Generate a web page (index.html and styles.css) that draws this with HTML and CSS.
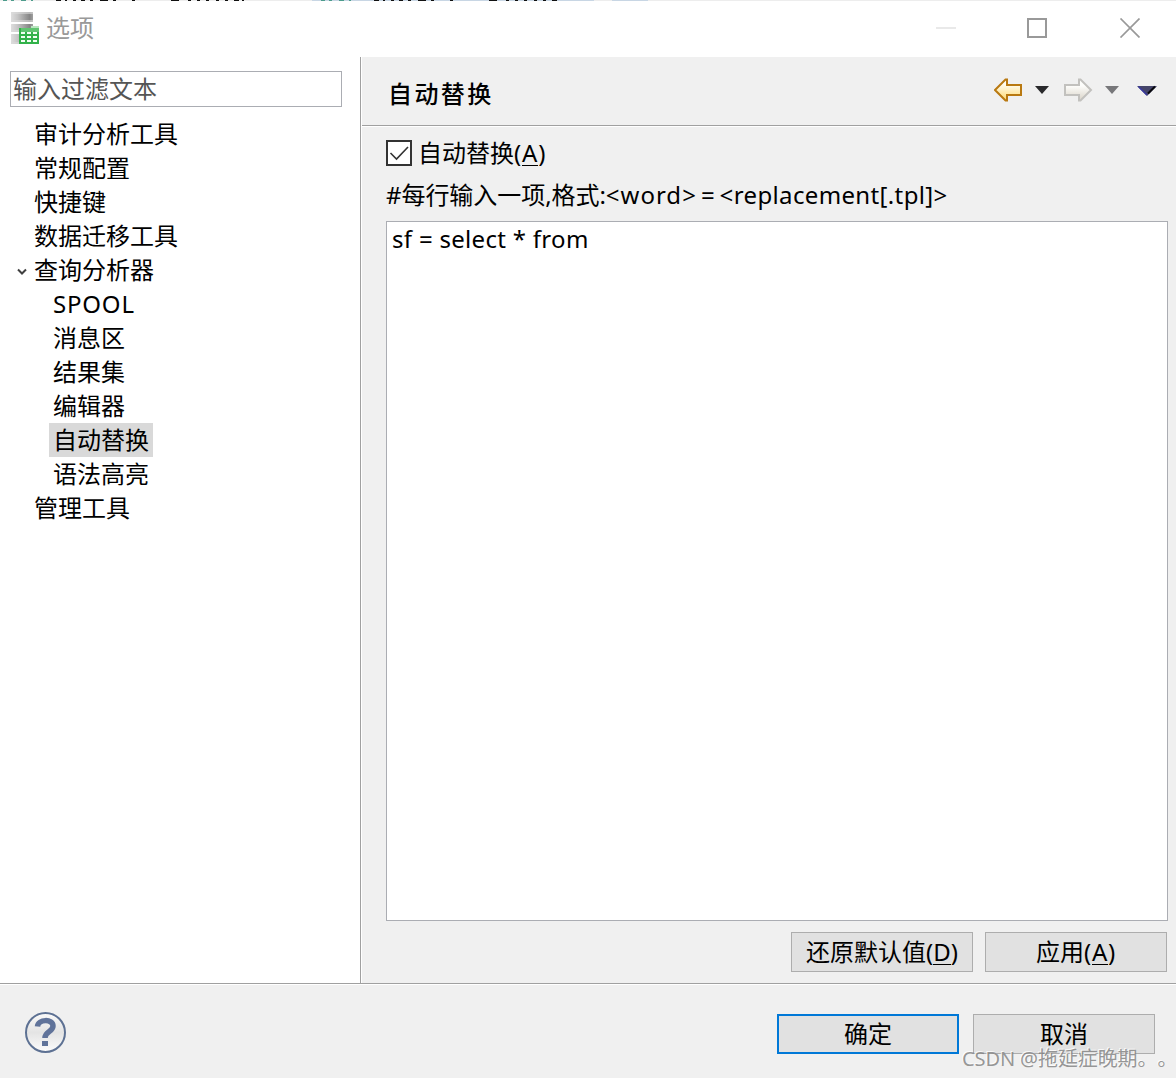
FILE: index.html
```html
<!DOCTYPE html>
<html lang="zh-CN">
<head>
<meta charset="utf-8">
<title>选项</title>
<link rel="stylesheet" href="styles.css">
</head>
<body>
<div class="window">
  <svg class="backdrop" width="1176" height="1" viewBox="0 0 1176 1" shape-rendering="crispEdges">
    <rect width="1176" height="1" fill="#ededed"/>
    <rect x="312" width="282" height="1" fill="#c8d6e4"/><rect x="612" width="36" height="1" fill="#c8d6e4"/>
    <path d="M3 .5h4m4 0h3m7 0h5m5 0h2M321 .5h4m4 0h3m7 0h5m5 0h2" stroke="#4d9c8c"/>
    <path d="M56 .5h5m4 0h2m6 0h3m5 0h4m5 0h3m7 0h8m5 0h3m16 0h3m36 0h8m9 0h3m6 0h3m6 0h3m7 0h3m6 0h3m6 0h5m3 0h2M374 .5h5m4 0h2m6 0h3m5 0h4m5 0h3m7 0h8m5 0h3m16 0h3m36 0h8m9 0h3m6 0h3m6 0h3m7 0h3m6 0h3m6 0h5" stroke="#111"/>
  </svg>
  <header class="titlebar">
    <svg class="app-icon" width="28" height="32" viewBox="0 0 28 32" shape-rendering="crispEdges">
      <defs><linearGradient id="steel"><stop offset="0" stop-color="#dedede"/><stop offset=".3" stop-color="#c6c6c6"/><stop offset=".85" stop-color="#858585"/><stop offset="1" stop-color="#a0a0a0"/></linearGradient></defs>
      <path d="M0 0h22v10H0zM0 12h22v8H0zM0 22h22v10H0z" fill="url(#steel)"/>
      <path d="M0 0h22v2H0zM0 8h22v2H0zM0 18h22v2H0zM0 30h22v2H0z" fill="#dcdcdc" opacity=".6"/>
      <path d="M20 14h8v2h-8z" fill="#b9e5bf"/>
      <path d="M8 16h20v16H8z" fill="#32b24a"/><path d="M10 16h18v4H10z" fill="#60c471"/>
      <path d="M10 20h4v2h-4zm6 0h4v2h-4zm6 0h4v2h-4zM10 24h4v2h-4zm6 0h4v2h-4zm6 0h4v2h-4zM10 28h4v2h-4zm6 0h4v2h-4zm6 0h4v2h-4z" fill="#f2fff3"/>
    </svg>
    <span class="title">选项</span>
    <svg class="win-controls" width="204" height="20" viewBox="0 0 204 20" fill="none">
      <path d="M0 10h20" stroke="#e9e9e9" stroke-width="2" shape-rendering="crispEdges"/>
      <path d="M92 1h18v18H92z" stroke="#999" stroke-width="2"/>
      <path d="M184.500.5l19 19m0-19l-19 19" stroke="#999" stroke-width="1.700"/>
    </svg>
  </header>
  <main class="main">
    <aside class="sidebar">
      <div class="filter">输入过滤文本</div>
      <ul class="tree">
        <li>审计分析工具</li><li>常规配置</li><li>快捷键</li><li>数据迁移工具</li>
        <li class="open"><svg class="chevron" width="10" height="8" viewBox="0 0 10 8"><path d="M1 1.500l4 4 4-4" fill="none" stroke="#404040" stroke-width="2"/></svg>查询分析器
          <ul class="subtree">
            <li class="spool">SPOOL</li><li>消息区</li><li>结果集</li><li>编辑器</li>
            <li><span class="selected">自动替换</span></li><li>语法高亮</li>
          </ul>
        </li>
        <li>管理工具</li>
      </ul>
    </aside>
    <section class="page">
      <div class="page-header">
        <h1>自动替换</h1>
        <svg class="nav" width="164" height="24" viewBox="0 0 164 24">
          <defs>
            <linearGradient id="gold" x2="0" y2="1"><stop offset=".2" stop-color="#fffdf4"/><stop offset="1" stop-color="#ffd96d"/></linearGradient>
            <linearGradient id="pale" x2="0" y2="1"><stop offset=".3" stop-color="#fdfdfb"/><stop offset="1" stop-color="#d9d3c8"/></linearGradient>
          </defs>
          <path d="M1 12L11.500 1.500H13V7h14v10H13v5.500h-1.500z" fill="url(#gold)" stroke="#b97911" stroke-width="2"/>
          <path d="M41 8h14l-7 8z" fill="#29292b"/>
          <path d="M97 12L86.500 1.500H85V7H71v10h14v5.500h1.500z" fill="url(#pale)" stroke="#c2c1be" stroke-width="2"/>
          <path d="M111 8h14l-7 8z" fill="#77777a"/>
          <path d="M143 8h20l-10 10z" fill="#45456a"/><path d="M144.500 8.500l8.500 8.500" stroke="#3838a0" stroke-width="1.500"/><path d="M161 8.500l-7 7" stroke="#08080c" stroke-width="2"/>
        </svg>
      </div>
      <div class="page-body">
        <div class="check-row">
          <svg width="26" height="26" viewBox="0 0 26 26"><path d="M1 1h24v24H1z" fill="#fff" stroke="#333" stroke-width="2"/><path d="M4.500 13l6 6L22 7" fill="none" stroke="#333" stroke-width="1.600"/></svg>
          <span class="check-label">自动替换<span class="key">(<u>A</u>)</span></span>
        </div>
        <div class="hint"><span class="hint-cn">#每行输入一项,格式:</span><span class="hint-word">&lt;word&gt;</span><span class="hint-eq">=</span><span class="hint-format">&lt;replacement[.tpl]&gt;</span></div>
        <div class="editor">sf = select * from</div>
        <div class="actions"><div class="button"><span>还原默认值(<u>D</u>)</span></div><div class="button"><span>应用<span class="key">(<u>A</u>)</span></span></div></div>
      </div>
    </section>
  </main>
  <footer class="footer">
    <svg class="help" width="42" height="42" viewBox="0 0 42 42">
      <defs><linearGradient id="glass" x2="0" y2="1"><stop offset="0" stop-color="#fafafa"/><stop offset=".5" stop-color="#e4e4e4"/><stop offset="1" stop-color="#fcfcfc"/></linearGradient></defs>
      <circle cx="20.500" cy="20.500" r="19.500" fill="url(#glass)" stroke="#5d7193" stroke-width="2"/>
      <path d="M12.500 14.500c.5-7.500 15.500-8 15.500-.5 0 6-8 5-8 12" fill="none" stroke="#60739a" stroke-width="5.500"/><path d="M17 29h6v5h-6z" fill="#60739a"/>
    </svg>
    <div class="dialog-buttons"><div class="button primary"><span>确定</span></div><div class="button"><span>取消</span></div></div>
  </footer>
  <div class="watermark">CSDN @拖延症晚期。。</div>
</div>
</body>
</html>
```
FILE: styles.css
```css
* { box-sizing: border-box; }
body { margin: 0; font: 400 24px/34px "Noto Sans", "Noto Sans CJK SC", sans-serif; color: #000; background: #fff; }
.window { position: relative; display: flex; flex-direction: column; width: 1176px; height: 1078px; overflow: hidden; }
svg { display: block; flex: none; }
ul { list-style: none; margin: 0; padding: 0; }
u { text-decoration: none; box-shadow: inset 0 -1px #000; display: inline-block; line-height: 27px; }
.titlebar { display: flex; height: 56px; padding: 11px 36px 0 11px; }
.title { margin: -1px auto 0 7px; color: #999; }
.win-controls { margin-top: 6px; }
.main { display: flex; height: 926px; }
.sidebar { width: 361px; border-right: 1px solid #a0a0a0; padding: 14px 18px 0 10px; }
.filter { height: 36px; border: 1px solid #abadb3; padding-left: 2px; color: #555; line-height: 34px; }
.tree { margin-top: 10px; padding-left: 24px; }
.tree li { min-height: 34px; white-space: nowrap; }
.open { position: relative; }
.chevron { position: absolute; left: -17px; top: 15px; }
.subtree { padding-left: 19px; }
.spool { letter-spacing: .8px; }
.selected { display: inline-block; height: 34px; margin-left: -4px; padding: 0 4px; background: #d9d9d9; }
.page { flex: 1; background: #f0f0f0; border-left: 1px solid #fff; }
.page-header { display: flex; justify-content: space-between; height: 69px; padding: 21px 18px 0 26px; border-bottom: 1px solid #a0a0a0; box-shadow: 0 1px #fff; }
h1 { margin: -1px 0 0; font: 500 24px/32px "Noto Sans CJK SC", sans-serif; letter-spacing: 2.4px; }
.page-body { padding: 14px 8px 0 24px; }
.check-row { display: flex; align-items: center; height: 26px; gap: 6px; }
.key { letter-spacing: .8px; }
.hint { display: flex; height: 34px; margin-top: 12px; white-space: nowrap; }
.hint-cn { letter-spacing: -.05px; }
.hint-word { letter-spacing: 1px; }
.hint-eq { margin: 0 5px 0 4px; }
.hint-format { letter-spacing: .36px; }
.editor { height: 700px; margin-top: 9px; padding: 0 5px; border: 1px solid #abadb3; background: #fff; letter-spacing: .3px; }
.actions { display: flex; justify-content: flex-end; gap: 12px; margin: 11px 1px 0 0; }
.button { display: flex; align-items: center; justify-content: center; width: 182px; height: 40px; background: #e1e1e1; border: 1px solid #adadad; }
.primary { border: 2px solid #0078d7; }
.footer { display: flex; justify-content: space-between; height: 95px; padding: 29px 21px 0 25px; background: #f0f0f0; border-top: 1px solid #a0a0a0; box-shadow: inset 0 1px #fff; }
.help { margin-top: -1px; }
.dialog-buttons { display: flex; gap: 14px; margin-top: 1px; }
.watermark { position: absolute; left: 962px; top: 1047px; font-size: 20px; line-height: 24px; letter-spacing: -.1px; text-spacing-trim: space-all; font-kerning: none; color: rgba(125,125,125,.8); text-shadow: -1px -1px rgba(255,255,255,.8); white-space: nowrap; }
```
